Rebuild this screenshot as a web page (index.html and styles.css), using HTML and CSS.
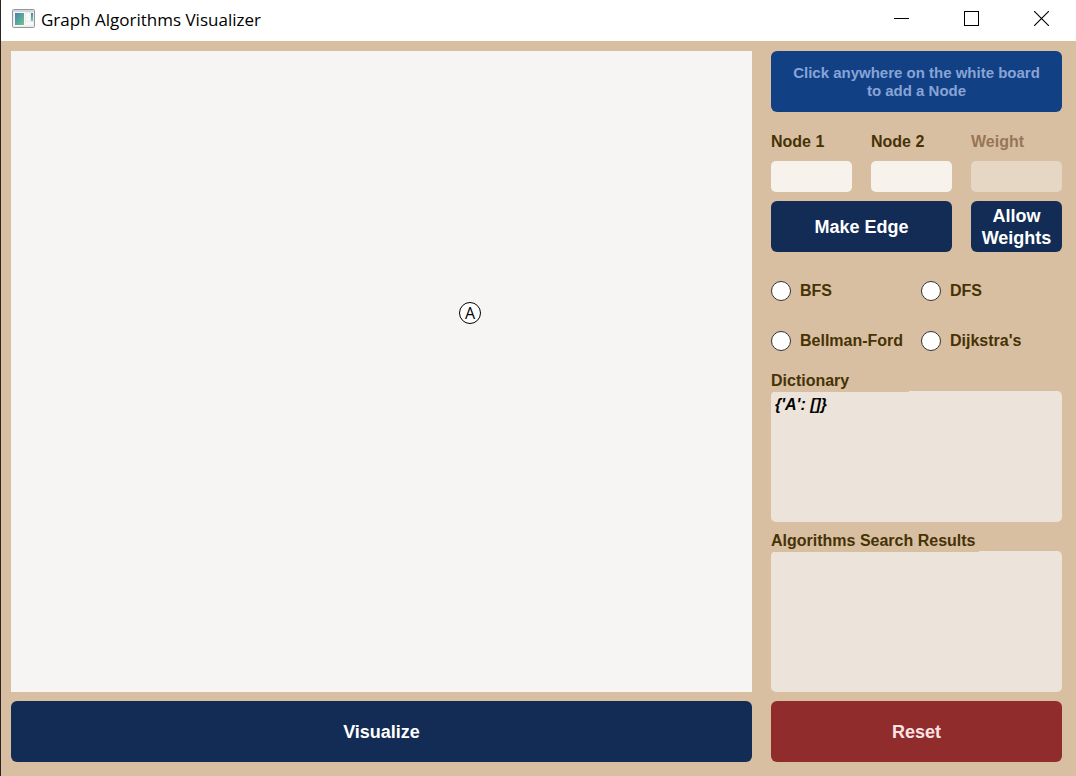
FILE: index.html
```html
<!DOCTYPE html>
<html lang="en">
<head>
<meta charset="utf-8">
<meta name="viewport" content="width=device-width, initial-scale=1">
<title>Graph Algorithms Visualizer</title>
<link rel="stylesheet" href="styles.css">
</head>
<body>
<div class="window">
  <header class="titlebar">
    <svg class="app-icon" width="23" height="19" viewBox="0 0 23 19" aria-hidden="true">
      <defs>
        <linearGradient id="pane" x1="0" y1="0" x2="1" y2="1">
          <stop offset="0" stop-color="#4283b4"/>
          <stop offset="1" stop-color="#6fc58c"/>
        </linearGradient>
        <linearGradient id="strip" x1="0" y1="0" x2="0" y2="1">
          <stop offset="0" stop-color="#4283b4"/>
          <stop offset="1" stop-color="#7cc9a0"/>
        </linearGradient>
      </defs>
      <rect x="0.5" y="0.5" width="22" height="18" rx="1" fill="#ececec" stroke="#94989c"/>
      <rect x="1" y="1" width="21" height="2" fill="#d3d7db"/>
      <rect x="2" y="3" width="11" height="14" fill="#f8f8f8"/>
      <rect x="3" y="4" width="9" height="12" fill="url(#pane)"/>
      <rect x="14" y="4" width="4" height="8" fill="#f8f8f8"/>
      <rect x="19" y="4" width="2" height="8" fill="url(#strip)"/>
      <rect x="14" y="13" width="7" height="3" fill="#f8f8f8"/>
    </svg>
    <h1 class="title">Graph Algorithms Visualizer</h1>
    <div class="window-controls">
      <button class="window-control" type="button" aria-label="Minimize">
        <svg width="15" height="15" viewBox="0 0 15 15"><path d="M0 7.5H15" stroke="#000"/></svg>
      </button>
      <button class="window-control" type="button" aria-label="Maximize">
        <svg width="15" height="15" viewBox="0 0 15 15"><rect x="0.5" y="0.5" width="14" height="14" fill="none" stroke="#000"/></svg>
      </button>
      <button class="window-control" type="button" aria-label="Close">
        <svg width="15" height="15" viewBox="0 0 15 15"><path d="M0 0L15 15M15 0L0 15" stroke="#000" stroke-width="1.1"/></svg>
      </button>
    </div>
  </header>
  <main class="workspace">
    <section class="board-column">
      <div class="board" aria-label="White board"><span class="node">A</span></div>
      <button class="button tall" type="button">Visualize</button>
    </section>
    <form class="sidebar">
      <button class="button tall hint" type="button" disabled>Click anywhere on the white board to add a Node</button>
      <div class="edge-form">
        <label class="label" for="node1">Node 1</label>
        <label class="label" for="node2">Node 2</label>
        <label class="label muted" for="weight">Weight</label>
        <input class="field" id="node1" type="text">
        <input class="field" id="node2" type="text">
        <input class="field" id="weight" type="text" disabled>
        <button class="button make-edge" type="button">Make Edge</button>
        <button class="button" type="button">Allow Weights</button>
      </div>
      <div class="algorithms">
        <label class="choice"><input class="radio" type="radio" name="algorithm">BFS</label>
        <label class="choice"><input class="radio" type="radio" name="algorithm">DFS</label>
        <label class="choice"><input class="radio" type="radio" name="algorithm">Bellman-Ford</label>
        <label class="choice"><input class="radio" type="radio" name="algorithm">Dijkstra's</label>
      </div>
      <div class="panel">
        <label class="label panel-label" for="dictionary">Dictionary</label>
        <textarea class="output" id="dictionary" readonly>{'A': []}</textarea>
      </div>
      <div class="panel panel-results">
        <label class="label panel-label panel-label-wide" for="results">Algorithms Search Results</label>
        <textarea class="output" id="results" readonly></textarea>
      </div>
      <button class="button tall reset" type="reset">Reset</button>
    </form>
  </main>
</div>
</body>
</html>
```
FILE: styles.css
```css
* {
  box-sizing: border-box;
}

body {
  margin: 0;
  font-family: "Liberation Sans", Arial, sans-serif;
}

.window {
  display: flex;
  flex-direction: column;
  min-height: 100vh;
  background: #d9bfa2;
  border-left: 1px solid #2b2624;
}

.titlebar {
  display: flex;
  align-items: center;
  height: 41px;
  padding: 0 0 4px 11px;
  background: #fff;
}

.app-icon {
  margin-right: 6px;
}

.title {
  flex: 1;
  margin: 0;
  padding-top: 2px;
  color: #000;
  font: 400 17px/24px "Open Sans", "Noto Sans", sans-serif;
}

.window-controls {
  display: flex;
}

.window-control {
  display: grid;
  place-items: center;
  width: 70px;
  height: 36px;
  padding: 0;
  border: 0;
  background: none;
}

.workspace {
  display: grid;
  flex: 1;
  grid-template-columns: 1fr 291px;
  gap: 19px;
  padding: 10px 14px 14px 10px;
}

.board-column {
  display: flex;
  flex-direction: column;
  gap: 9px;
}

.board {
  position: relative;
  flex: 1;
  background: #f6f5f4;
}

.node {
  position: absolute;
  top: 251px;
  left: 448px;
  width: 22px;
  height: 22px;
  border: 1px solid #000;
  border-radius: 50%;
  background: #fff;
  color: #000;
  font: 16px/20px "Open Sans", "Noto Sans", sans-serif;
  text-align: center;
}

.button {
  height: 51px;
  padding: 0 8px;
  border: 0;
  border-radius: 6px;
  background: #122c56;
  color: #fff;
  font: bold 18px/22px "Liberation Sans", Arial, sans-serif;
}

.tall {
  flex: none;
  height: 61px;
}

.hint {
  padding: 0 20px;
  background: #124085;
  color: #88a4d5;
  font-size: 15px;
  line-height: 18px;
}

.reset {
  margin-top: 9px;
  background: #912c2d;
  color: #fbe3e3;
}

.sidebar {
  display: flex;
  flex-direction: column;
}

.edge-form {
  display: grid;
  grid-template-columns: 81px 81px 1fr;
  column-gap: 19px;
  row-gap: 9px;
  margin-top: 20px;
}

.label {
  color: #463305;
  font-size: 16px;
  font-weight: bold;
  line-height: 20px;
}

.muted {
  color: #967655;
}

.field {
  width: 100%;
  height: 31px;
  padding: 0 6px;
  border: 0;
  border-radius: 5px;
  background: #f7f3ec;
  font: 16px/20px "Liberation Sans", Arial, sans-serif;
}

.field:disabled {
  background: #e6d6c4;
}

.make-edge {
  grid-column: span 2;
}

.algorithms {
  display: grid;
  grid-template-columns: 150px 1fr;
  row-gap: 30px;
  margin-top: 29px;
}

.choice {
  display: flex;
  align-items: center;
  gap: 9px;
  height: 20px;
  color: #463305;
  font-size: 16px;
  font-weight: bold;
  white-space: nowrap;
}

.radio {
  flex: none;
  width: 20px;
  height: 20px;
  margin: 0;
  border: 1px solid #333;
  border-radius: 50%;
  background: #fff;
  appearance: none;
}

.radio:checked {
  border-width: 6px;
}

.panel {
  display: flex;
  flex: 131 1 151px;
  flex-direction: column;
  margin-top: 20px;
}

.panel-results {
  flex: 141 1 161px;
  margin-top: 9px;
}

/* The label's background overlaps the top edge of the box below it. */
.panel-label {
  z-index: 1;
  width: 138px;
  height: 21px;
  margin-bottom: -1px;
  background: #d9bfa2;
}

.panel-label-wide {
  width: 208px;
}

.output {
  flex: 1;
  width: 100%;
  min-height: 80px;
  padding: 4px;
  border: 0;
  border-radius: 5px;
  background: #ece4db;
  color: #000;
  font: italic bold 16px/20px "Liberation Sans", Arial, sans-serif;
  outline: 0;
  resize: none;
}
```
